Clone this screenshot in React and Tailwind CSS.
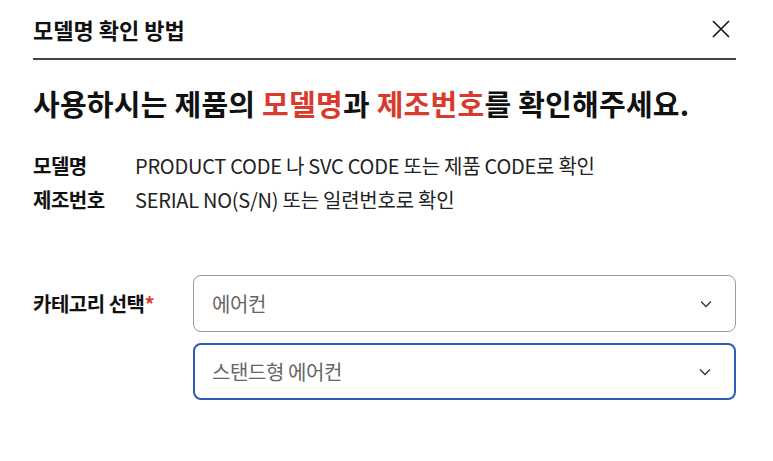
import React from "react";

const font = { fontFamily: '"Noto Sans CJK KR", "Noto Sans", sans-serif' };

function Chevron() {
  return (
    <svg width="12" height="8" viewBox="0 0 12 8" fill="none" className="shrink-0">
      <path d="M1 1.5 L6 6.5 L11 1.5" stroke="#333" strokeWidth="1.3" />
    </svg>
  );
}

function Select({ value, active }) {
  return (
    <div
      className={
        "flex h-[57px] w-full items-center justify-between rounded-[8px] bg-white pr-[23px] " +
        (active ? "border-2 border-[#2c5cb4] pl-[17px]" : "border border-[#9a9a9a] pl-[18px]")
      }
    >
      <span className="text-[20px] tracking-[-0.4px] text-[#666]">{value}</span>
      <Chevron />
    </div>
  );
}

export default function App() {
  return (
    <div className="h-[461px] w-[773px] bg-white text-[#111]" style={font}>
      <div className="px-[33px] pr-[37px]">
        <div className="flex h-[60px] items-center justify-between border-b-2 border-[#444]">
          <h1 className="text-[22px] font-bold">모델명 확인 방법</h1>
          <svg width="20" height="20" viewBox="0 0 20 20" className="mr-[5px]">
            <path d="M2 2 L18 18 M18 2 L2 18" stroke="#111" strokeWidth="1.6" />
          </svg>
        </div>
        <p className="mt-[23px] text-[29px] font-bold leading-[40px] tracking-[0.25px]">
          사용하시는 제품의 <span className="text-[#d93a2b]">모델명</span>과{" "}
          <span className="text-[#d93a2b]">제조번호</span>를 확인해주세요.
        </p>
        <div className="mt-[29px] flex flex-col gap-[6px] text-[20px] leading-[28px]">
          <div className="flex">
            <span className="w-[102px] font-bold tracking-[-0.5px]">모델명</span>
            <span className="tracking-[-0.25px] text-[#222]">PRODUCT CODE 나 SVC CODE 또는 제품 CODE로 확인</span>
          </div>
          <div className="flex">
            <span className="w-[102px] font-bold tracking-[-0.5px]">제조번호</span>
            <span className="tracking-[-0.25px] text-[#222]">SERIAL NO(S/N) 또는 일련번호로 확인</span>
          </div>
        </div>
        <div className="mt-[61px] flex">
          <div className="flex h-[57px] w-[160px] items-center">
            <span className="text-[20px] font-bold tracking-[-0.5px]">
              카테고리 선택<span className="text-[#d93a2b]">*</span>
            </span>
          </div>
          <div className="flex flex-1 flex-col gap-[11px]">
            <Select value="에어컨" />
            <Select value="스탠드형 에어컨" active />
          </div>
        </div>
      </div>
    </div>
  );
}
